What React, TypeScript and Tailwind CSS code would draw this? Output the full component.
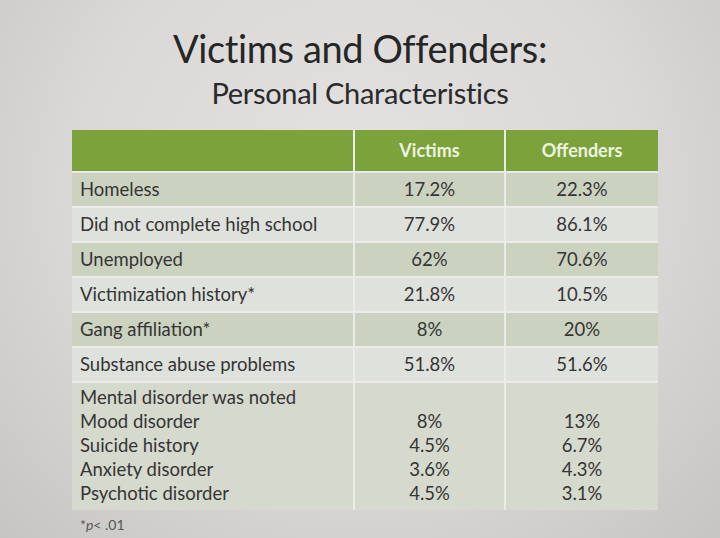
import React from "react";

const rows: [string, string, string][] = [
  ["Homeless", "17.2%", "22.3%"],
  ["Did not complete high school", "77.9%", "86.1%"],
  ["Unemployed", "62%", "70.6%"],
  ["Victimization history*", "21.8%", "10.5%"],
  ["Gang affiliation*", "8%", "20%"],
  ["Substance abuse problems", "51.8%", "51.6%"],
];

const mental: [string, string, string][] = [
  ["Mental disorder was noted", "", ""],
  ["Mood disorder", "8%", "13%"],
  ["Suicide history", "4.5%", "6.7%"],
  ["Anxiety disorder", "3.6%", "4.3%"],
  ["Psychotic disorder", "4.5%", "3.1%"],
];

export default function App() {
  const font = { fontFamily: "Lato, 'Open Sans', sans-serif" };
  return (
    <div
      className="w-[720px] h-[538px] overflow-hidden flex flex-col items-center bg-[radial-gradient(ellipse_at_50%_35%,#e3e2e0_0%,#dad9d7_55%,#c6c5c3_100%)] text-[#353535]"
      style={font}
    >
      <div className="mt-[25px] text-[38px] leading-[46px] tracking-[-0.4px] text-[#262626]">
        Victims and Offenders:
      </div>
      <div className="mt-[5px] text-[29px] leading-[34px] tracking-[-0.3px] text-[#2a2a2a]">
        Personal Characteristics
      </div>
      <div className="mt-[20px] ml-[10px] grid grid-cols-[281px_149px_152px] gap-[2px] bg-[#ecebe8]">
        <div className="h-[41px] bg-[#7ca33b]" />
        <div className="h-[41px] bg-[#7ca33b] flex items-center justify-center text-[18px] font-bold text-[#eef3e0]">
          Victims
        </div>
        <div className="h-[41px] bg-[#7ca33b] flex items-center justify-center text-[18px] font-bold text-[#eef3e0]">
          Offenders
        </div>
        {rows.map(([l, v, o], i) => {
          const bg = i % 2 === 0 ? "bg-[#cbd2c0]" : "bg-[#dfe1dc]";
          return (
            <React.Fragment key={l}>
              <div className={`h-[33px] ${bg} flex items-center pl-[8px] text-[18.5px]`}>{l}</div>
              <div className={`h-[33px] ${bg} flex items-center justify-center text-[18.5px]`}>{v}</div>
              <div className={`h-[33px] ${bg} flex items-center justify-center text-[18.5px]`}>{o}</div>
            </React.Fragment>
          );
        })}
        {[0, 1, 2].map((c) => (
          <div
            key={c}
            className={`h-[127px] bg-[#d6d9cd] pt-[2px] flex flex-col text-[18.5px] leading-[24px] ${
              c === 0 ? "pl-[8px]" : "items-center"
            }`}
          >
            {mental.map((m, i) => (
              <div key={i} className="h-[24px]">
                {m[c]}
              </div>
            ))}
          </div>
        ))}
      </div>
      <div className="self-start ml-[80px] mt-[4px] text-[14px] text-[#555]">
        *<span className="italic">p</span>&lt; .01
      </div>
    </div>
  );
}
